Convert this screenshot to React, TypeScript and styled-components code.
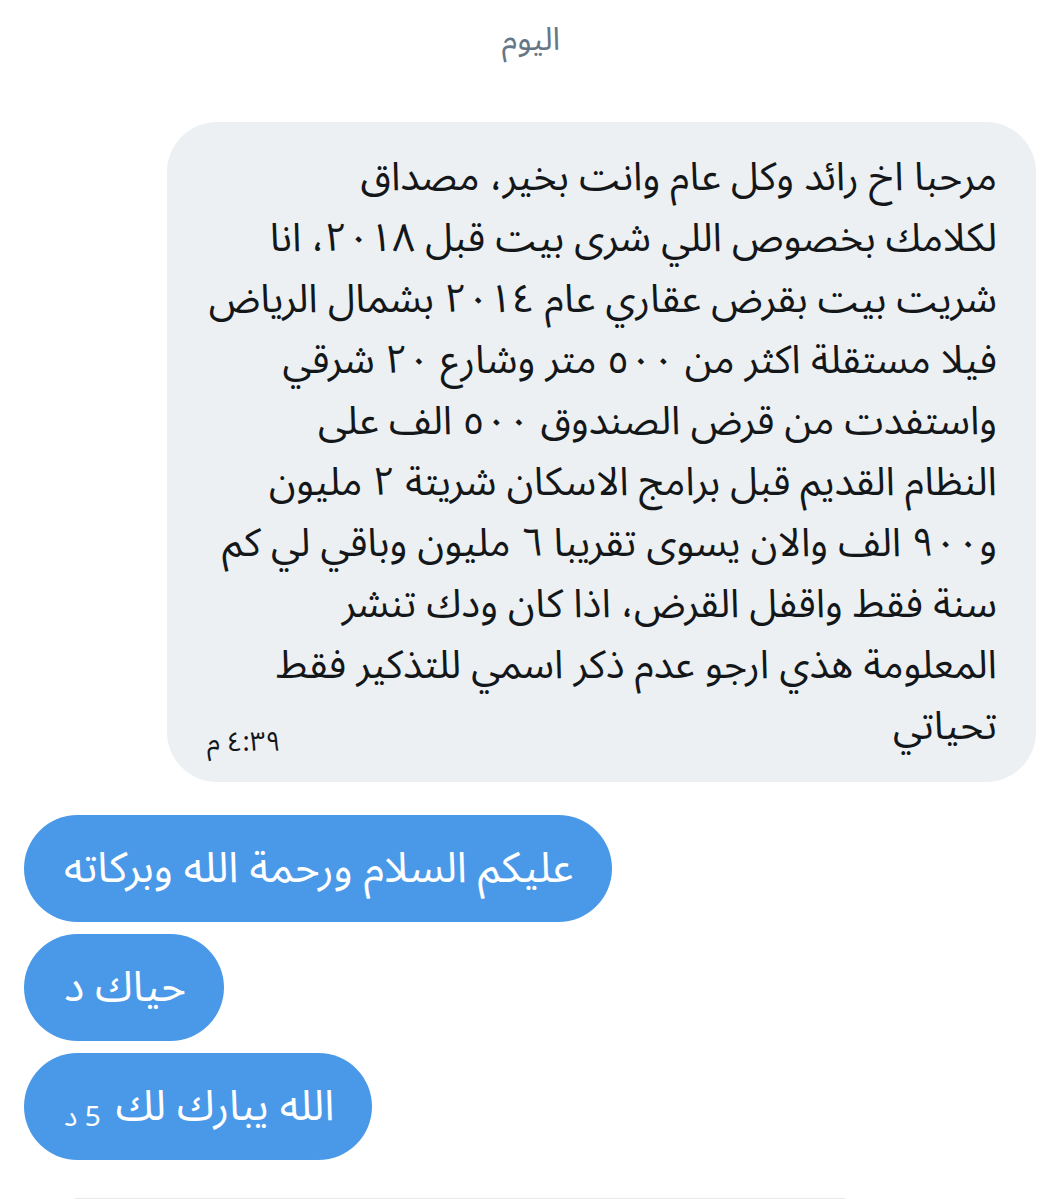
import React from "react";
import styled, { createGlobalStyle } from "styled-components";

const Global = createGlobalStyle`
  html, body { margin: 0; padding: 0; background: #ffffff; }
  body { font-family: "Noto Sans Arabic", "Noto Naskh Arabic", "DejaVu Sans", sans-serif; }
`;

const Page = styled.div`
  width: 1062px;
  height: 1200px;
  overflow: hidden;
  display: flex;
  flex-direction: column;
  direction: rtl;
  font-family: "Noto Sans Arabic", "DejaVu Sans", sans-serif;
`;

const DayLabel = styled.div`
  text-align: center;
  color: #657786;
  font-size: 32px;
  line-height: 40px;
  padding-top: 20px;
  height: 122px;
  box-sizing: border-box;
`;

const IncomingRow = styled.div`
  display: flex;
  justify-content: flex-start;
  padding-right: 26px;
`;

const IncomingBubble = styled.div`
  width: 869px;
  box-sizing: border-box;
  background: #ecf0f2;
  color: #14171a;
  border-radius: 50px;
  padding: 25px 39px 25px 40px;
  font-size: 39.5px;
  line-height: 61px;
`;

const Line = styled.div`
  white-space: nowrap;
  height: 61px;
`;

const LastLine = styled.div`
  display: flex;
  justify-content: space-between;
  align-items: flex-end;
  white-space: nowrap;
  height: 61px;
`;

const Time = styled.span`
  font-size: 27px;
  line-height: 30px;
  color: #14171a;
  margin-bottom: -1px;
`;

const OutgoingList = styled.div`
  display: flex;
  flex-direction: column;
  align-items: flex-end;
  gap: 12px;
  padding-left: 24px;
  margin-top: 33px;
`;

const OutgoingBubble = styled.div`
  display: flex;
  align-items: flex-end;
  gap: 15px;
  background: #4a99e9;
  color: #ffffff;
  border-radius: 54px;
  height: 107px;
  box-sizing: border-box;
  padding: 23px 38px 23px 40px;
  font-size: 42.5px;
  line-height: 61px;
  white-space: nowrap;
`;

const Stamp = styled.span`
  font-size: 28px;
  line-height: 30px;
  margin-bottom: 4px;
`;

const Footer = styled.div`
  margin: 38px 217px 0 75px;
  border-top: 1px solid #e6ecf0;
`;

const lines = [
  "مرحبا اخ رائد وكل عام وانت بخير، مصداق",
  "لكلامك بخصوص اللي شرى بيت قبل ٢٠١٨، انا",
  "شريت بيت بقرض عقاري عام ٢٠١٤ بشمال الرياض",
  "فيلا مستقلة اكثر من ٥٠٠ متر وشارع ٢٠ شرقي",
  "واستفدت من قرض الصندوق ٥٠٠ الف على",
  "النظام القديم قبل برامج الاسكان شريتة ٢ مليون",
  "و٩٠٠ الف والان يسوى تقريبا ٦ مليون وباقي لي كم",
  "سنة فقط واقفل القرض، اذا كان ودك تنشر",
  "المعلومة هذي ارجو عدم ذكر اسمي للتذكير فقط",
];

export default function App() {
  return (
    <>
      <Global />
      <Page>
        <DayLabel>اليوم</DayLabel>
        <IncomingRow>
          <IncomingBubble>
            {lines.map((l) => (
              <Line key={l}>{l}</Line>
            ))}
            <LastLine>
              <span>تحياتي</span>
              <Time>٤:٣٩ م</Time>
            </LastLine>
          </IncomingBubble>
        </IncomingRow>
        <OutgoingList>
          <OutgoingBubble>عليكم السلام ورحمة الله وبركاته</OutgoingBubble>
          <OutgoingBubble>حياك د</OutgoingBubble>
          <OutgoingBubble>
            <span>الله يبارك لك</span>
            <Stamp>5 د</Stamp>
          </OutgoingBubble>
        </OutgoingList>
        <Footer />
      </Page>
    </>
  );
}
